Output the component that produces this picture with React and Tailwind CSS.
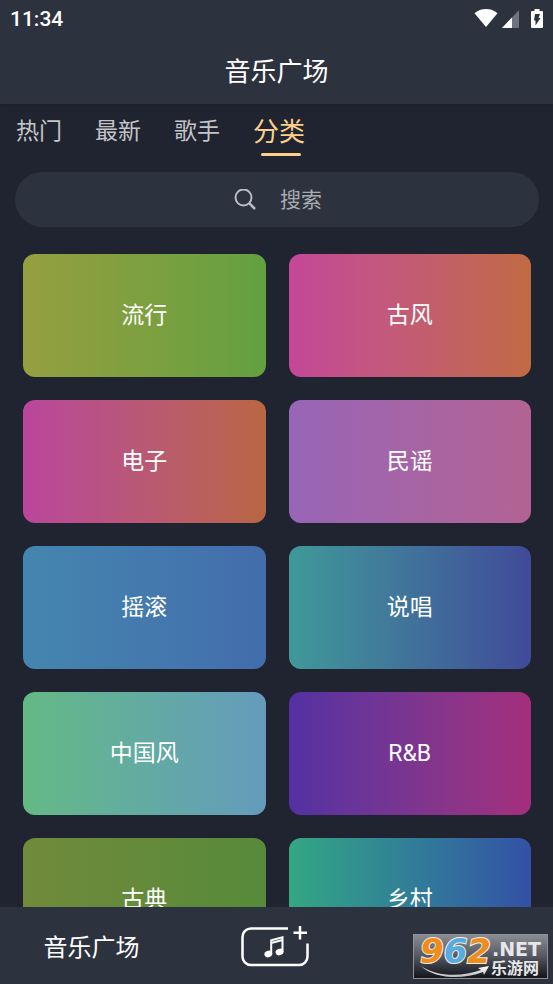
import React, { useState } from 'react';

const tabs = ['热门', '最新', '歌手', '分类'];

const categories = [
  { name: '流行', color: 'from-[#959f40] to-[#62a040]' },
  { name: '古风', color: 'from-[#c44799] to-[#c26a42]' },
  { name: '电子', color: 'from-[#ba459c] to-[#b96641]' },
  { name: '民谣', color: 'from-[#9865b7] to-[#b36393]' },
  { name: '摇滚', color: 'from-[#4486af] to-[#436dac]' },
  { name: '说唱', color: 'from-[#3f9998] to-[#404a99]' },
  { name: '中国风', color: 'from-[#64b984] to-[#649bbc]' },
  { name: 'R&B', color: 'from-[#5330a2] to-[#a42e7c]' },
  { name: '古典', color: 'from-[#718a3b] to-[#568a3a]' },
  { name: '乡村', color: 'from-[#34a782] to-[#3450a5]' },
];

function StatusBar() {
  return (
    <div className="flex h-[38px] items-center justify-between pl-[10px] pr-[10px]">
      <span className="text-[21px] leading-6 font-medium">11:34</span>
      <div className="flex items-center">
        <svg className="h-5 w-6" viewBox="0 0 24 20" fill="#fff">
          <path d="M12 18 0.500 4.200C3.600 1.600 7.500 0 12 0s8.400 1.600 11.500 4.200z" />
        </svg>
        <svg className="ml-1 h-5 w-[17px]" viewBox="0 0 17 20">
          <path d="M0 19 17 1v18z" fill="#6f737d" />
          <path d="M0 19 10 8.500V19z" fill="#fff" />
        </svg>
        <svg className="ml-3 h-5 w-3" viewBox="0 0 12 20">
          <path d="M3.500 0h5v2H11a1 1 0 0 1 1 1v15a1 1 0 0 1-1 1H1a1 1 0 0 1-1-1V3a1 1 0 0 1 1-1h2.500z" fill="#fff" />
          <path d="M4 5h5L7.500 9H9.500L4.500 16.500V11.500H3z" fill="#2d323f" />
        </svg>
      </div>
    </div>
  );
}

function AddMusicIcon() {
  return (
    <svg className="h-[42px] w-[68px]" viewBox="0 0 68 42" fill="none" stroke="#fff" strokeWidth="2.500">
      <path d="M47 3.500H10A8.500 8.500 0 0 0 1.500 12v19A8.500 8.500 0 0 0 10 40h48a8.500 8.500 0 0 0 8.500-8.500V18.500" />
      <path d="M59 1v13.500M52.500 7.700h13.500" />
      <path d="M30.200 29V15.300L41.500 12.300V27M30.200 18l11.300-3" strokeWidth="2" />
      <ellipse cx="27.300" cy="29" rx="4" ry="3.200" fill="#fff" stroke="none" transform="rotate(-20 27.300 29)" />
      <ellipse cx="38.500" cy="27" rx="4" ry="3.200" fill="#fff" stroke="none" transform="rotate(-20 38.500 27)" />
    </svg>
  );
}

function SiteBadge() {
  return (
    <div className="absolute right-[5px] bottom-[5px] h-[45px] w-[135px] border border-[#8f9198] bg-linear-to-b from-[#8b8d94] via-[#555861] to-[#14161c]">
      <svg className="h-full w-full overflow-visible" viewBox="0 0 133 43">
        <defs>
          <linearGradient id="swoosh" x1="0" x2="0" y1="0" y2="1">
            <stop offset="0" stopColor="#fff" />
            <stop offset="1" stopColor="#b9bbc0" />
          </linearGradient>
        </defs>
        <text
          x="6"
          y="28"
          fontFamily="DejaVu Sans, sans-serif"
          fontWeight="700"
          fontStyle="italic"
          fontSize="34"
          stroke="#f1eee6"
          strokeWidth="2"
          paintOrder="stroke"
        >
          <tspan fill="#ee8d1c">9</tspan>
          <tspan fill="#58abe0">6</tspan>
          <tspan fill="#ee8d1c">2</tspan>
        </text>
        <text x="78" y="21" fill="#e6e7e9" fontFamily="DejaVu Sans, sans-serif" fontWeight="700" fontSize="19">.NET</text>
        <path d="M7 31C23 42 48 42 67 35l-3-2 11-2-5 9-1-3C48 45 21 44 7 31z" fill="url(#swoosh)" />
        <text x="77" y="39" fill="#e6e7e9" fontFamily="Noto Sans CJK SC, sans-serif" fontWeight="700" fontSize="16">乐游网</text>
      </svg>
    </div>
  );
}

export default function App() {
  const [activeTab, setActiveTab] = useState('分类');
  const [query, setQuery] = useState('');

  return (
    <div className="relative flex h-screen flex-col overflow-hidden bg-[#1f2430] font-[Roboto,'Noto_Sans_CJK_SC',sans-serif] text-white">
      <header className="shrink-0 bg-[#2d323f] shadow-sm">
        <StatusBar />
        <h1 className="pt-[14px] pb-3 text-center text-[26px] leading-10">音乐广场</h1>
      </header>

      <nav className="flex h-[52px] shrink-0 gap-[33px] px-4">
        {tabs.map((tab) => (
          <button
            key={tab}
            type="button"
            onClick={() => setActiveTab(tab)}
            className={
              tab === activeTab
                ? 'relative pt-1 text-[26px] leading-8 text-[#fcd08a]'
                : 'pt-1 text-[23px] leading-8 text-[#c4c5c7]'
            }
          >
            {tab}
            {tab === activeTab && (
              <span className="absolute bottom-0 left-2 h-[3px] w-10 rounded-full bg-[#fcd08a]" />
            )}
          </button>
        ))}
      </nav>

      <label className="mr-[14px] ml-[15px] mt-4 flex h-[55px] shrink-0 items-center justify-center gap-6 rounded-full bg-[#2d323f] pl-1">
        <svg className="h-[22px] w-[22px]" viewBox="0 0 22 22" fill="none" stroke="#b9bcc6" strokeWidth="2">
          <circle cx="9.500" cy="8.500" r="8" />
          <path d="M15.200 14.200 21 20" strokeWidth="2.500" />
        </svg>
        <input
          type="text"
          aria-label="搜索"
          placeholder="搜索"
          value={query}
          onChange={(e) => setQuery(e.target.value)}
          className="w-11 bg-transparent text-[21px] leading-8 text-white outline-none placeholder:text-[#a9abb0]"
        />
      </label>

      <main className="mt-[27px] min-h-0 flex-1 overflow-y-auto pr-[22px] pl-[23px] [scrollbar-width:none]">
        <div className="grid grid-cols-2 gap-[23px] pb-6">
          {categories.map((category) => (
            <button
              key={category.name}
              type="button"
              className={`h-[123px] rounded-xl bg-linear-to-r text-[23px] leading-8 ${category.color}`}
            >
              {category.name}
            </button>
          ))}
        </div>
      </main>

      <footer className="grid h-[77px] shrink-0 grid-cols-3 items-center bg-[#2d323f] pr-1 text-2xl">
        <button type="button" className="pt-1">音乐广场</button>
        <button type="button" aria-label="添加音乐" className="flex justify-center">
          <AddMusicIcon />
        </button>
        <div />
      </footer>

      <SiteBadge />
    </div>
  );
}
